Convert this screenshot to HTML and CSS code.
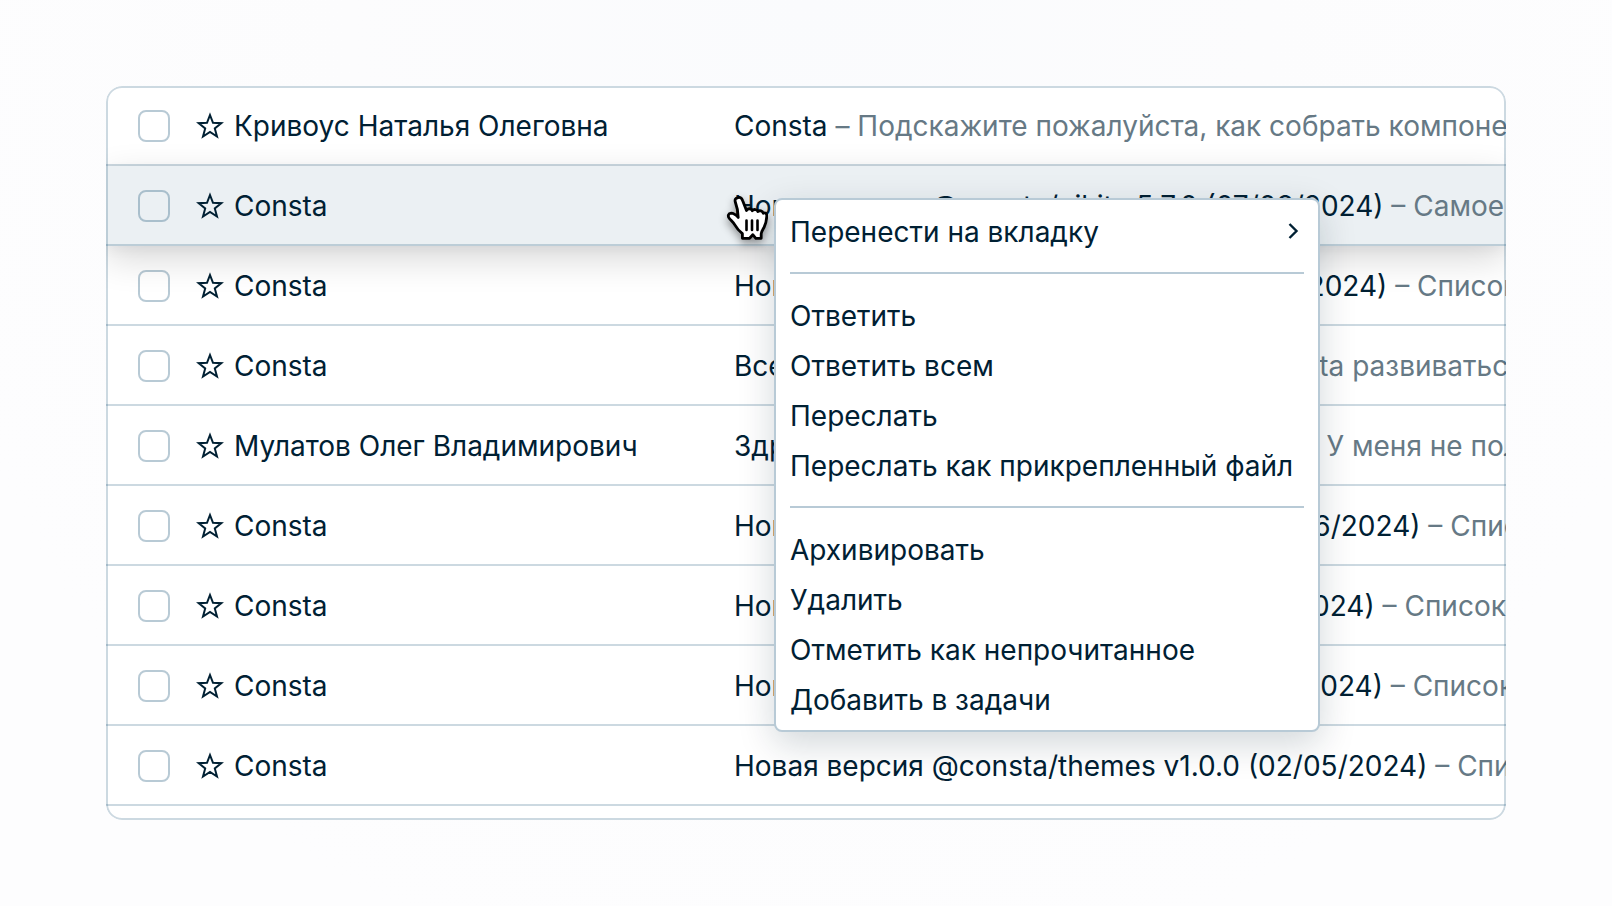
FILE: index.html
```html
<!DOCTYPE html>
<html lang="ru">
<head>
<meta charset="utf-8">
<title>Почта</title>
<link rel="stylesheet" href="styles.css">
</head>
<body>
<svg class="sprite" aria-hidden="true">
  <symbol id="star" viewBox="0 0 28 28"><path d="M14 3l3 7.800 8.300.4-6.500 5.200 2.200 8.100-7-4.500-7 4.500 2.200-8.100-6.500-5.200 8.300-.4z" fill="none" stroke="currentColor" stroke-width="2"/></symbol>
</svg>
<main class="stage">
  <div class="mail">
    <ul class="list">
      <li class="row"><input class="check" type="checkbox" aria-label="Выбрать письмо"><button class="star" aria-label="В избранное"><svg><use href="#star"/></svg></button><span class="sender">Кривоус Наталья Олеговна</span><p class="text">Consta <span class="muted">– Подскажите пожалуйста, как собрать компонент</span></p></li>
      <li class="row row-active"><input class="check" type="checkbox" aria-label="Выбрать письмо"><button class="star" aria-label="В избранное"><svg><use href="#star"/></svg></button><span class="sender">Consta</span><p class="text">Новая версия @consta/uikit v5.7.0 (07/08/2024) <span class="muted">– Самое</span></p></li>
      <li class="row"><input class="check" type="checkbox" aria-label="Выбрать письмо"><button class="star" aria-label="В избранное"><svg><use href="#star"/></svg></button><span class="sender">Consta</span><p class="text">Новая версия @consta/uikit v5.6.0 (27/06/2024) <span class="muted">– Список</span></p></li>
      <li class="row"><input class="check" type="checkbox" aria-label="Выбрать письмо"><button class="star" aria-label="В избранное"><svg><use href="#star"/></svg></button><span class="sender">Consta</span><p class="text">Всем привет <span class="muted">– Пора дизайн-системе Consta развиваться</span></p></li>
      <li class="row"><input class="check" type="checkbox" aria-label="Выбрать письмо"><button class="star" aria-label="В избранное"><svg><use href="#star"/></svg></button><span class="sender">Мулатов Олег Владимирович</span><p class="text">Здравствуйте, нужна помощь по Consta. <span class="muted">– У меня не получается</span></p></li>
      <li class="row"><input class="check" type="checkbox" aria-label="Выбрать письмо"><button class="star" aria-label="В избранное"><svg><use href="#star"/></svg></button><span class="sender">Consta</span><p class="text">Новая версия @consta/charts v0.4.0 (04/06/2024) <span class="muted">– Список</span></p></li>
      <li class="row"><input class="check" type="checkbox" aria-label="Выбрать письмо"><button class="star" aria-label="В избранное"><svg><use href="#star"/></svg></button><span class="sender">Consta</span><p class="text">Новая версия @consta/uikit v5.3.1 (21/05/2024) <span class="muted">– Список</span></p></li>
      <li class="row"><input class="check" type="checkbox" aria-label="Выбрать письмо"><button class="star" aria-label="В избранное"><svg><use href="#star"/></svg></button><span class="sender">Consta</span><p class="text">Новая версия @consta/uikit v5.3.0 (13/05/2024) <span class="muted">– Список</span></p></li>
      <li class="row"><input class="check" type="checkbox" aria-label="Выбрать письмо"><button class="star" aria-label="В избранное"><svg><use href="#star"/></svg></button><span class="sender">Consta</span><p class="text">Новая версия @consta/themes v1.0.0 (02/05/2024) <span class="muted">– Список</span></p></li>
    </ul>
  </div>
  <div class="menu" role="menu">
    <button class="item" role="menuitem">Перенести на вкладку<svg class="chevron" viewBox="0 0 24 24"><path d="M9.500 4l7 7-7 7" fill="none" stroke="currentColor" stroke-width="2.400"/></svg></button>
    <hr class="rule">
    <button class="item" role="menuitem">Ответить</button>
    <button class="item" role="menuitem">Ответить всем</button>
    <button class="item" role="menuitem">Переслать</button>
    <button class="item" role="menuitem">Переслать как прикрепленный файл</button>
    <hr class="rule">
    <button class="item" role="menuitem">Архивировать</button>
    <button class="item" role="menuitem">Удалить</button>
    <button class="item" role="menuitem">Отметить как непрочитанное</button>
    <button class="item" role="menuitem">Добавить в задачи</button>
  </div>
  <svg class="cursor" viewBox="0 0 42 46" aria-hidden="true"><path d="M12 2.600c2.200-.7 3.800.7 4.600 2.900l3.900 10c.8-2.300 4.800-2.500 5.800.2 1.300-1.900 5-1.500 5.600.9 1.600-1.600 4.800-.9 5.300 1.700 2.200-1.100 3.700.3 3.600 2.700-.3 4.500-.6 7.200-2.600 11-1.900 3.400-3 5-3 6.800v4.500h-5.400l-3-3.600-3.200 3.600h-7.200v-4.600c-3.200-2.600-5.400-5-7.400-8.600-1.600-2.700-3.400-4.200-5.500-6.500-2.200-2.500-1.200-5.300 1.700-5.400 2.700 0 4.700 1.700 7 4.200L11.400 14.500 9.300 7C8.600 4.500 9.500 3.200 12 2.600z" fill="#fff" stroke="#000" stroke-width="2.800" stroke-linejoin="round"/><path d="M20.500 25.500v9.500M26 25.500v9.500M31.500 25.500v9.500" stroke="#000" stroke-width="2.600" stroke-linecap="round"/></svg>
</main>
</body>
</html>
```
FILE: styles.css
```css
* { box-sizing: border-box; }
body {
  margin: 0;
  min-height: 100vh;
  background: radial-gradient(ellipse at 50% 0, #fafbfd 0, #fcfcfd 40%, #fdfdfe 80%);
  color: #002033;
  font: 28px/40px Inter, "Noto Sans", sans-serif;
}
button { font: inherit; color: inherit; background: none; border: 0; padding: 0; }
.sprite { position: absolute; width: 0; height: 0; }
.stage { position: relative; padding: 86px 106px; }
.mail {
  position: relative;
  overflow: hidden;
  padding-bottom: 14px;
  border-radius: 16px;
  background: #fff;
}
.mail::after {
  content: "";
  position: absolute;
  inset: 0;
  z-index: 2;
  border: 2px solid rgba(0, 66, 105, 0.2);
  border-radius: 16px;
  pointer-events: none;
}
.list { margin: 0; padding: 0; list-style: none; }
.row {
  display: grid;
  grid-template-columns: 32px 64px 500px minmax(0, 1fr);
  align-items: center;
  height: 80px;
  padding: 2px 0 0 32px;
  border-bottom: 2px solid rgba(0, 66, 105, 0.2);
}
.row-active {
  position: relative;
  z-index: 1;
  background: #ebf0f3;
  box-shadow: 0 12px 36px rgba(0, 0, 0, 0.16), 0 4px 12px rgba(0, 32, 51, 0.04);
}
.check {
  appearance: none;
  width: 32px;
  height: 32px;
  margin: 0;
  border: 2px solid rgba(0, 66, 105, 0.28);
  border-radius: 8px;
}
.star { display: flex; justify-content: center; padding-left: 16px; }
.star svg { width: 28px; height: 28px; }
.text { margin: 0; white-space: nowrap; overflow: hidden; }
.muted { color: #667985; }
.menu {
  position: absolute;
  z-index: 3;
  top: 198px;
  left: 774px;
  width: 546px;
  padding: 6px 14px;
  border: 2px solid #b8cad6;
  border-radius: 8px;
  background: #fff;
  box-shadow: 0 12px 36px rgba(0, 32, 51, 0.18);
}
.item {
  display: flex;
  align-items: center;
  justify-content: space-between;
  width: 100%;
  height: 50px;
  padding-top: 2px;
  text-align: left;
  white-space: nowrap;
}
.chevron { width: 24px; height: 24px; }
.rule { height: 2px; margin: 16px 0; border: 0; background: #b8cad6; }
.cursor {
  position: absolute;
  z-index: 4;
  top: 195px;
  left: 726px;
  width: 42px;
  height: 46px;
  filter: drop-shadow(0 4px 4px rgba(0, 0, 0, 0.4));
}
```
